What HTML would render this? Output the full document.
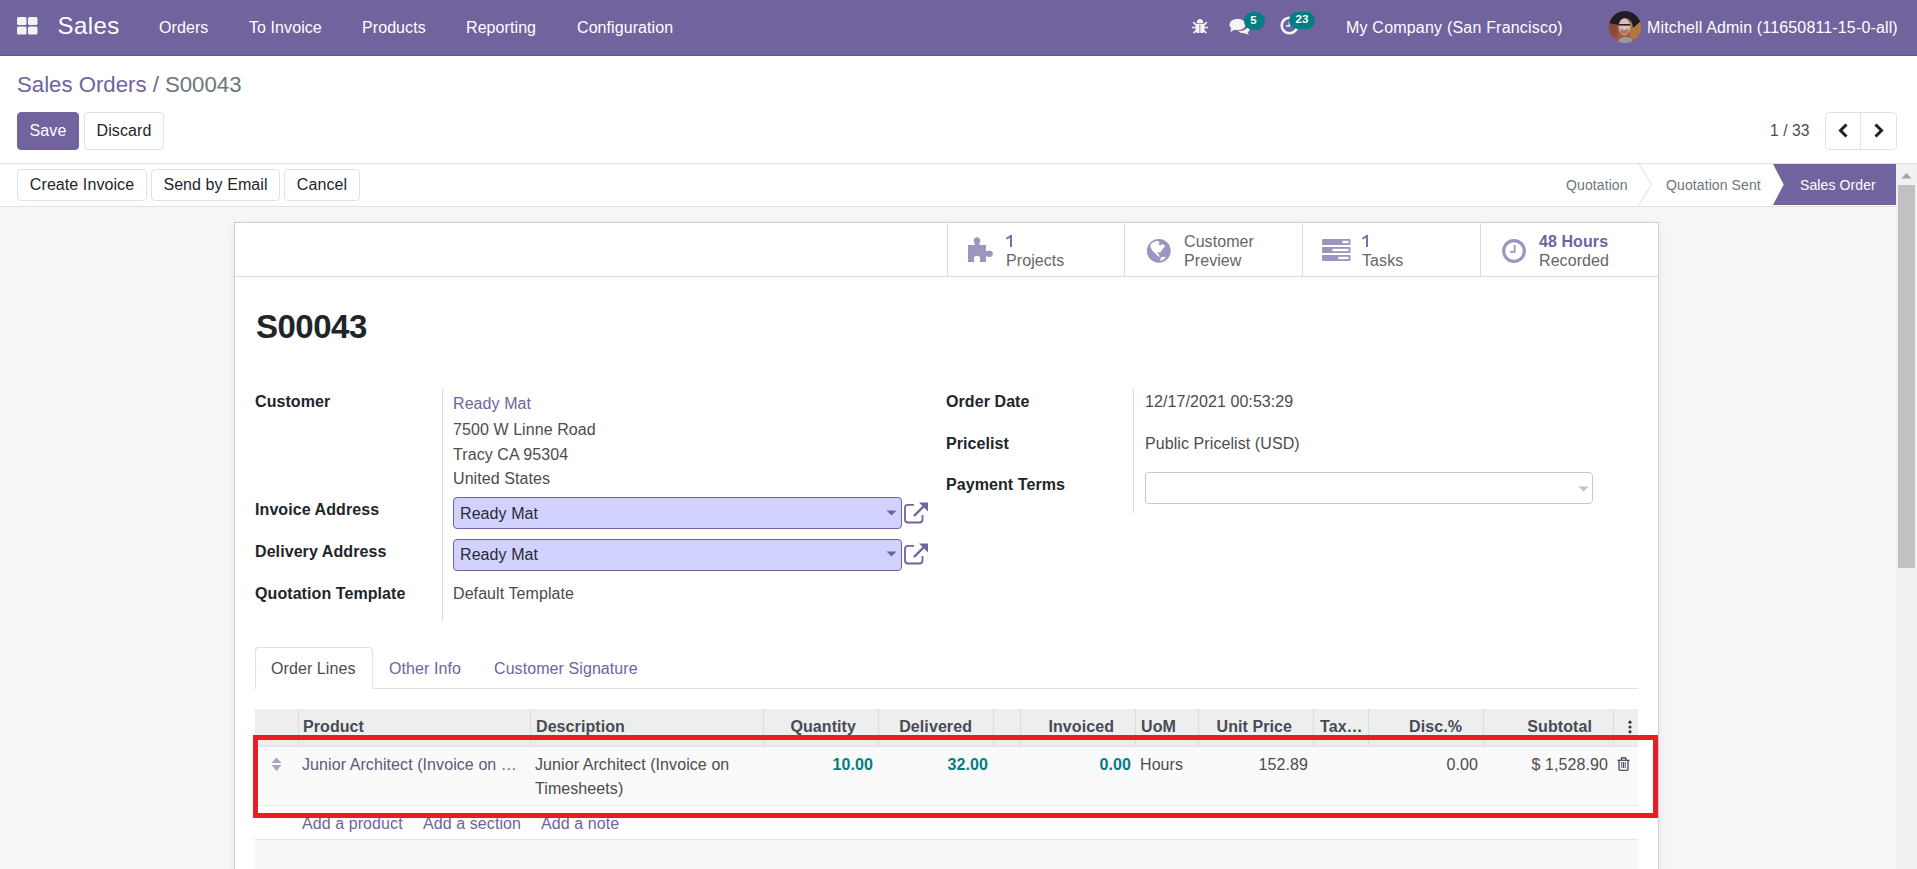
<!DOCTYPE html>
<html><head><meta charset="utf-8">
<style>
*{box-sizing:border-box;margin:0;padding:0}
html,body{width:1917px;height:869px;overflow:hidden;background:#fff;font-family:"Liberation Sans",sans-serif;color:#4c4c4c;font-size:16px}
.a{position:absolute}
.t{position:absolute;white-space:nowrap;line-height:16px;font-size:16px;letter-spacing:0.08px}
.r{text-align:right}
#nav{left:0;top:0;width:1917px;height:56px;background:#71639e;border-bottom:1px solid #5f5390}
#nav .t{color:#fff}
.btn{position:absolute;border:1px solid #dee2e6;border-radius:4px;background:#fff}
.lbl{color:#212529;font-weight:bold}
.lnk{color:#71639e}
.hd{font-weight:bold;color:#4a4a55}
.num{font-weight:bold;color:#017e84}
.vl{position:absolute;width:1px;background:#dcdcdc}
.cs{position:absolute;top:709px;width:1px;height:37px;background:#dcdcdc}
</style></head><body>

<!-- NAVBAR -->
<div id="nav" class="a">
  <svg class="a" style="left:17px;top:17px" width="21" height="18" viewBox="0 0 21 18">
    <rect x="0" y="0" width="9.5" height="8" rx="1.5" fill="#f3f3f3"/>
    <rect x="11" y="0" width="9.5" height="8" rx="1.5" fill="#f3f3f3"/>
    <rect x="0" y="9.5" width="9.5" height="8" rx="1.5" fill="#f3f3f3"/>
    <rect x="11" y="9.5" width="9.5" height="8" rx="1.5" fill="#f3f3f3"/>
  </svg>
  <div class="t" style="left:57.5px;top:13.5px;font-size:24px;line-height:24px;letter-spacing:0.45px">Sales</div>
  <div class="t" style="left:159px;top:20px">Orders</div>
  <div class="t" style="left:249px;top:20px">To Invoice</div>
  <div class="t" style="left:362px;top:20px">Products</div>
  <div class="t" style="left:466px;top:20px">Reporting</div>
  <div class="t" style="left:577px;top:20px">Configuration</div>
  <!-- bug -->
  <svg class="a" style="left:1188px;top:14px" width="24" height="24" viewBox="0 0 24 24">
    <path d="M8.8 9 Q8.8 5.1 12 5.1 Q15.2 5.1 15.2 9 Z" fill="#f3f3f3"/>
    <path d="M7.5 9.7 H16.6 V17 Q16.6 19 14.6 19 H9.5 Q7.5 19 7.5 17 Z" fill="#f3f3f3"/>
    <path d="M5.2 8 L7.9 10.9 M18.8 8 L16.1 10.9 M4.1 13.5 H7.6 M19.9 13.5 H16.5 M5.5 19.3 L7.9 16.7 M18.5 19.3 L16.1 16.7" stroke="#f3f3f3" stroke-width="1.6"/>
    <rect x="11.4" y="10.6" width="0.9" height="8.4" fill="#8a7fae"/>
  </svg>
  <!-- chat -->
  <svg class="a" style="left:1229px;top:18px" width="22" height="18" viewBox="0 0 22 18">
    <ellipse cx="8.5" cy="6.5" rx="8" ry="5.8" fill="#f3f3f3"/>
    <path d="M2 10 L1.5 14 L6 11.5 Z" fill="#f3f3f3"/>
    <path d="M9 12.8 Q14 13.5 17 11 Q19.5 9 18.5 6.5 Q21.5 8.5 20.5 12 Q19.8 13.8 18.5 14.5 L20 17 L15.5 15.3 Q11.5 15.8 9 12.8 Z" fill="#f3f3f3"/>
  </svg>
  <div class="a" style="left:1244px;top:12px;width:21px;height:18px;border-radius:9px;background:#017e84"></div>
  <div class="t" style="left:1243px;top:12.5px;width:21px;text-align:center;font-size:11.5px;line-height:14px;font-weight:bold">5</div>
  <!-- clock -->
  <svg class="a" style="left:1280px;top:16px" width="19" height="19" viewBox="0 0 19 19">
    <circle cx="9.5" cy="9.5" r="7.8" fill="none" stroke="#f3f3f3" stroke-width="2.6"/>
    <path d="M9.5 5 V10 H6" fill="none" stroke="#f3f3f3" stroke-width="1.6"/>
  </svg>
  <div class="a" style="left:1289px;top:12px;width:26px;height:17px;border-radius:8.5px;background:#017e84"></div>
  <div class="t" style="left:1289px;top:11.5px;width:26px;text-align:center;font-size:11.5px;line-height:14px;font-weight:bold">23</div>
  <div class="t" style="left:1346px;top:20px;letter-spacing:0.2px">My Company (San Francisco)</div>
  <svg class="a" style="left:1609px;top:11px" width="32" height="32" viewBox="0 0 32 32">
    <defs><clipPath id="av"><circle cx="16" cy="16" r="16"/></clipPath></defs>
    <g clip-path="url(#av)">
      <rect width="32" height="32" fill="#9a5a3c"/>
      <rect x="0" y="10" width="8" height="16" fill="#8a4a38"/>
      <rect x="21" y="8" width="11" height="20" fill="#b07840"/>
      <path d="M0 12 Q2 0 16 0 Q30 0 32 10 L24 17 Q23 7 16 7 Q10 7 10 14 L4 13 Z" fill="#1e1c28"/>
      <path d="M0 26 Q4 30 10 32 L0 32 Z" fill="#2a2228"/>
      <ellipse cx="15.5" cy="16" rx="5.8" ry="8.5" fill="#d4c0c0"/>
      <rect x="10" y="13" width="11" height="1.6" fill="#2a2024"/>
      <path d="M11.5 17 Q15.5 21 19.5 17 L19.5 22 Q15.5 25.5 11.5 22 Z" fill="#b8765a"/>
      <path d="M8 32 Q10 26 16 26 Q23 25 25 32 Z" fill="#9a98a6"/>
    </g>
  </svg>
  <div class="t" style="left:1647px;top:20px;letter-spacing:0.15px">Mitchell Admin (11650811-15-0-all)</div>
</div>

<!-- CONTROL PANEL -->
<div class="a" style="left:0;top:56px;width:1917px;height:108px;background:#fff;border-bottom:1px solid #dee2e6"></div>
<div class="t" style="left:17px;top:74px;font-size:22.2px;line-height:22px;color:#71639e;letter-spacing:0">Sales Orders / <span style="color:#6c757d">S00043</span></div>
<div class="btn" style="left:17px;top:112px;width:62px;height:38px;background:#71639e;border-color:#71639e"></div>
<div class="t" style="left:17px;top:123px;width:62px;text-align:center;color:#fff">Save</div>
<div class="btn" style="left:84px;top:112px;width:80px;height:38px"></div>
<div class="t" style="left:84px;top:123px;width:80px;text-align:center;color:#212529">Discard</div>
<div class="t" style="left:1770px;top:123px;font-size:15.6px;color:#4c4c4c">1 / 33</div>
<div class="btn" style="left:1825px;top:112px;width:72px;height:38px"></div>
<div class="a" style="left:1860px;top:113px;width:1px;height:36px;background:#dee2e6"></div>
<svg class="a" style="left:1838px;top:123px" width="11" height="15" viewBox="0 0 11 15"><path d="M8.5 1.5 L2.5 7.5 L8.5 13.5" fill="none" stroke="#1f1f2a" stroke-width="3"/></svg>
<svg class="a" style="left:1873px;top:123px" width="11" height="15" viewBox="0 0 11 15"><path d="M2.5 1.5 L8.5 7.5 L2.5 13.5" fill="none" stroke="#1f1f2a" stroke-width="3"/></svg>

<!-- STATUS BAR -->
<div class="a" style="left:0;top:164px;width:1896px;height:43px;background:#fff;border-bottom:1px solid #dee2e6"></div>
<div class="btn" style="left:17px;top:169px;width:130px;height:32px"></div>
<div class="t" style="left:17px;top:177px;width:130px;text-align:center;color:#212529">Create Invoice</div>
<div class="btn" style="left:151px;top:169px;width:129px;height:32px"></div>
<div class="t" style="left:151px;top:177px;width:129px;text-align:center;color:#212529">Send by Email</div>
<div class="btn" style="left:284px;top:169px;width:76px;height:32px"></div>
<div class="t" style="left:284px;top:177px;width:76px;text-align:center;color:#212529">Cancel</div>
<svg class="a" style="left:1630px;top:164px" width="266" height="42" viewBox="0 0 266 42">
  <path d="M9 0 L21.5 20.5 L9 41" fill="none" stroke="#dcdfe3" stroke-width="1"/>
  <path d="M143 0 H266 V41 H143 L153.7 20.5 Z" fill="#71639e"/>
</svg>
<div class="t" style="left:1566px;top:176.5px;font-size:14px;letter-spacing:0.1px;color:#6c757d">Quotation</div>
<div class="t" style="left:1666px;top:176.5px;font-size:14px;letter-spacing:0.1px;color:#6c757d">Quotation Sent</div>
<div class="t" style="left:1800px;top:176.5px;font-size:14px;letter-spacing:0.1px;color:#fff">Sales Order</div>

<!-- BACKGROUND -->
<div class="a" style="left:0;top:207px;width:1896px;height:662px;background:#f6f6f6"></div>
<!-- SCROLLBAR -->
<div class="a" style="left:1896px;top:164px;width:21px;height:705px;background:#f1f1f1"></div>
<svg class="a" style="left:1901px;top:172px" width="11" height="7" viewBox="0 0 11 7"><path d="M0.5 6.5 L5.5 1 L10.5 6.5 Z" fill="#a3a3a3"/></svg>
<div class="a" style="left:1898px;top:185px;width:17px;height:383px;background:#c1c1c1"></div>

<!-- SHEET -->
<div class="a" style="left:234px;top:222px;width:1425px;height:700px;background:#fff;border:1px solid #cfcdd9;box-shadow:5px 0 10px -5px rgba(0,0,0,.07),-5px 0 10px -5px rgba(0,0,0,.07)"></div>

<!-- button box -->
<div class="a" style="left:235px;top:276px;width:1423px;height:1px;background:#dcdcdc"></div>
<div class="vl" style="left:947px;top:223px;height:53px"></div>
<div class="vl" style="left:1124px;top:223px;height:53px"></div>
<div class="vl" style="left:1302px;top:223px;height:53px"></div>
<div class="vl" style="left:1480px;top:223px;height:53px"></div>

<svg class="a" style="left:967px;top:236px" width="28" height="27" viewBox="0 0 28 27">
  <path d="M1 9 H7.5 V6.5 A3.2 3.2 0 1 1 12.5 6.5 V9 H19 V15 H21 A3.2 3.2 0 1 1 21 20.5 H19 V26 H13 V24 A3.2 3.2 0 1 0 7 24 V26 H1 Z" fill="#9a96bd"/>
</svg>
<svg class="a" style="left:1006px;top:235px" width="7" height="12" viewBox="0 0 7 12"><path d="M4 0 H6 V12 H4 V2.8 Q2.5 4 0.3 4.6 V2.6 Q2.8 1.6 4 0 Z" fill="#7a6ea8"/></svg>
<div class="t" style="left:1006px;top:253px;color:#666">Projects</div>

<svg class="a" style="left:1144px;top:236px" width="30" height="30" viewBox="0 0 30 30">
  <circle cx="14.8" cy="14.9" r="11.9" fill="#9a96bd"/>
  <path d="M6.2 9.3 L7.9 6.9 L11.4 5.2 L13.5 4.8 L15.2 6.2 L16.2 6.9 L14.2 7.4 L14.5 8.6 L16.6 9.5 L17.3 8.6 L18.6 8.3 L21.1 9.7 L20.4 11.4 L18.6 13.1 L16.9 15.5 L16.2 16.6 L13.8 16.2 L13.5 17.3 L14.8 18.3 L15.9 20.7 L14.5 20.4 L11.4 17.6 L8.3 14.5 L6.9 12.1 L6.2 10 Z" fill="#fff"/>
  <path d="M16.6 22.1 L17.9 20.7 L21.7 21.1 L20.7 22.8 L17.9 24.2 L16.2 24.9 Z" fill="#fff"/>
</svg>
<div class="t" style="left:1184px;top:234px;color:#666">Customer</div>
<div class="t" style="left:1184px;top:253px;color:#666">Preview</div>

<svg class="a" style="left:1322px;top:239px" width="29" height="22" viewBox="0 0 29 22">
  <rect x="0" y="0" width="28.5" height="6" rx="1" fill="#9a96bd"/>
  <rect x="0" y="8" width="28.5" height="6" rx="1" fill="#9a96bd"/>
  <rect x="0" y="16" width="28.5" height="6" rx="1" fill="#9a96bd"/>
  <rect x="20.5" y="1.8" width="6" height="2.4" fill="#fff"/>
  <rect x="10.5" y="9.8" width="16" height="2.4" fill="#fff"/>
  <rect x="16.5" y="17.8" width="10" height="2.4" fill="#fff"/>
</svg>
<svg class="a" style="left:1362px;top:235px" width="7" height="12" viewBox="0 0 7 12"><path d="M4 0 H6 V12 H4 V2.8 Q2.5 4 0.3 4.6 V2.6 Q2.8 1.6 4 0 Z" fill="#7a6ea8"/></svg>
<div class="t" style="left:1362px;top:253px;color:#666">Tasks</div>

<svg class="a" style="left:1502px;top:239px" width="25" height="25" viewBox="0 0 25 25">
  <circle cx="12" cy="12" r="10.3" fill="none" stroke="#9a96bd" stroke-width="3.2"/>
  <path d="M12.7 6 V12.8 H8" fill="none" stroke="#9a96bd" stroke-width="1.7"/>
</svg>
<div class="t" style="left:1539px;top:234px;font-weight:bold;color:#71639e">48 Hours</div>
<div class="t" style="left:1539px;top:253px;color:#666">Recorded</div>

<!-- title -->
<div class="t" style="left:256px;top:310px;font-size:33px;line-height:33px;font-weight:bold;color:#212529;letter-spacing:-0.5px">S00043</div>

<!-- left group -->
<div class="vl" style="left:442px;top:389px;height:233px"></div>
<div class="t lbl" style="left:255px;top:394px">Customer</div>
<div class="t lnk" style="left:453px;top:396px">Ready Mat</div>
<div class="t" style="left:453px;top:422px">7500 W Linne Road</div>
<div class="t" style="left:453px;top:447px">Tracy CA 95304</div>
<div class="t" style="left:453px;top:471px">United States</div>

<div class="t lbl" style="left:255px;top:502px">Invoice Address</div>
<div class="a" style="left:453px;top:497px;width:449px;height:32px;background:#d2d2ff;border:1px solid #6f62a0;border-radius:4px"></div>
<div class="t" style="left:460px;top:506px;color:#2a2a35">Ready Mat</div>
<svg class="a" style="left:886px;top:510px" width="11" height="6" viewBox="0 0 11 6"><path d="M0.5 0.5 H10.5 L5.5 5.5 Z" fill="#71639e"/></svg>
<svg class="a" style="left:903px;top:501px" width="26" height="23" viewBox="0 0 26 23">
  <path d="M11 3.8 H5 Q2 3.8 2 6.8 V18.5 Q2 21.5 5 21.5 H16.5 Q19.5 21.5 19.5 18.5 V14" fill="none" stroke="#71639e" stroke-width="1.8"/>
  <path d="M11 15 L22.5 3.5" stroke="#71639e" stroke-width="2.4"/>
  <path d="M16 1.5 H25 V10.5 Z" fill="#71639e"/>
</svg>

<div class="t lbl" style="left:255px;top:544px">Delivery Address</div>
<div class="a" style="left:453px;top:539px;width:449px;height:32px;background:#d2d2ff;border:1px solid #6f62a0;border-radius:4px"></div>
<div class="t" style="left:460px;top:547px;color:#2a2a35">Ready Mat</div>
<svg class="a" style="left:886px;top:551px" width="11" height="6" viewBox="0 0 11 6"><path d="M0.5 0.5 H10.5 L5.5 5.5 Z" fill="#71639e"/></svg>
<svg class="a" style="left:903px;top:542px" width="26" height="23" viewBox="0 0 26 23">
  <path d="M11 3.8 H5 Q2 3.8 2 6.8 V18.5 Q2 21.5 5 21.5 H16.5 Q19.5 21.5 19.5 18.5 V14" fill="none" stroke="#71639e" stroke-width="1.8"/>
  <path d="M11 15 L22.5 3.5" stroke="#71639e" stroke-width="2.4"/>
  <path d="M16 1.5 H25 V10.5 Z" fill="#71639e"/>
</svg>

<div class="t lbl" style="left:255px;top:586px">Quotation Template</div>
<div class="t" style="left:453px;top:586px">Default Template</div>

<!-- right group -->
<div class="vl" style="left:1133px;top:389px;height:124px"></div>
<div class="t lbl" style="left:946px;top:394px">Order Date</div>
<div class="t" style="left:1145px;top:394px">12/17/2021 00:53:29</div>
<div class="t lbl" style="left:946px;top:436px">Pricelist</div>
<div class="t" style="left:1145px;top:436px">Public Pricelist (USD)</div>
<div class="t lbl" style="left:946px;top:477px">Payment Terms</div>
<div class="a" style="left:1145px;top:472px;width:448px;height:32px;background:#fff;border:1px solid #c9c7d7;border-radius:4px"></div>
<svg class="a" style="left:1577.5px;top:486px" width="11" height="6" viewBox="0 0 11 6"><path d="M0.5 0.5 H10.5 L5.5 5.5 Z" fill="#c2c0d2"/></svg>

<!-- tabs -->
<div class="a" style="left:255px;top:688px;width:1383px;height:1px;background:#dee2e6"></div>
<div class="a" style="left:255px;top:647px;width:118px;height:42px;background:#fff;border:1px solid #dee2e6;border-bottom:none;border-radius:4px 4px 0 0"></div>
<div class="t" style="left:271px;top:661px">Order Lines</div>
<div class="t lnk" style="left:389px;top:661px">Other Info</div>
<div class="t lnk" style="left:494px;top:661px">Customer Signature</div>

<!-- table -->
<div class="a" style="left:255px;top:709px;width:1383px;height:38px;background:#eeeeee;border-bottom:2px solid #e3e6ea"></div>
<div class="cs" style="left:298px"></div>
<div class="cs" style="left:530px"></div>
<div class="cs" style="left:763px"></div>
<div class="cs" style="left:878px"></div>
<div class="cs" style="left:993px"></div>
<div class="cs" style="left:1020px"></div>
<div class="cs" style="left:1135px"></div>
<div class="cs" style="left:1198px"></div>
<div class="cs" style="left:1313px"></div>
<div class="cs" style="left:1368px"></div>
<div class="cs" style="left:1483px"></div>
<div class="cs" style="left:1613px"></div>
<div class="t hd" style="left:303px;top:719px">Product</div>
<div class="t hd" style="left:536px;top:719px">Description</div>
<div class="t hd r" style="left:700px;top:719px;width:156px">Quantity</div>
<div class="t hd r" style="left:820px;top:719px;width:152px">Delivered</div>
<div class="t hd r" style="left:960px;top:719px;width:154px">Invoiced</div>
<div class="t hd" style="left:1141px;top:719px">UoM</div>
<div class="t hd r" style="left:1150px;top:719px;width:142px">Unit Price</div>
<div class="t hd" style="left:1320px;top:719px">Tax…</div>
<div class="t hd r" style="left:1360px;top:719px;width:102px">Disc.%</div>
<div class="t hd r" style="left:1490px;top:719px;width:102px">Subtotal</div>
<svg class="a" style="left:1627px;top:720px" width="6" height="14" viewBox="0 0 6 14"><circle cx="3" cy="2.2" r="1.6" fill="#3a3a3a"/><circle cx="3" cy="7" r="1.6" fill="#3a3a3a"/><circle cx="3" cy="11.8" r="1.6" fill="#3a3a3a"/></svg>

<div class="a" style="left:255px;top:747px;width:1383px;height:59px;background:#fafafa;border-bottom:1px solid #e2e5e9"></div>
<svg class="a" style="left:271px;top:757px" width="11" height="15" viewBox="0 0 11 15"><path d="M0.5 6 L5.5 0.5 L10.5 6 Z M0.5 8 H10.5 L5.5 14 Z" fill="#a7a5c6"/></svg>
<div class="t" style="left:302px;top:757px;color:#5d5878">Junior Architect (Invoice on …</div>
<div class="t" style="left:535px;top:757px">Junior Architect (Invoice on</div>
<div class="t" style="left:535px;top:781px">Timesheets)</div>
<div class="t num r" style="left:780px;top:757px;width:93px">10.00</div>
<div class="t num r" style="left:895px;top:757px;width:93px">32.00</div>
<div class="t num r" style="left:1040px;top:757px;width:91px">0.00</div>
<div class="t" style="left:1140px;top:757px">Hours</div>
<div class="t r" style="left:1200px;top:757px;width:108px">152.89</div>
<div class="t r" style="left:1370px;top:757px;width:108px">0.00</div>
<div class="t r" style="left:1490px;top:757px;width:118px">$ 1,528.90</div>
<svg class="a" style="left:1617px;top:757px" width="14" height="14" viewBox="0 0 14 14">
  <path d="M0.5 3.3 H12.6 M4.3 3.3 V1.6 Q4.3 0.9 5 0.9 H8.2 Q8.9 0.9 8.9 1.6 V3.3" fill="none" stroke="#24243a" stroke-width="1.1"/>
  <path d="M2 3.5 V12.4 Q2 13.2 2.8 13.2 H10.2 Q11 13.2 11 12.4 V3.5" fill="none" stroke="#24243a" stroke-width="1.1"/>
  <path d="M4.8 5 V11 M6.5 5 V11 M8.2 5 V11" stroke="#3a3a55" stroke-width="0.9"/>
</svg>

<div class="a" style="left:255px;top:806px;width:1383px;height:34px;background:#fff;border-bottom:1px solid #e2e5e9"></div>
<div class="t lnk" style="left:302px;top:816px">Add a product</div>
<div class="t lnk" style="left:423px;top:816px">Add a section</div>
<div class="t lnk" style="left:541px;top:816px">Add a note</div>
<div class="a" style="left:255px;top:840px;width:1383px;height:40px;background:#f8f8f8"></div>

<!-- red highlight -->
<div class="a" style="left:253px;top:735px;width:405px;height:83px;border:5px solid #ea1c24;width:1405px"></div>

</body></html>
